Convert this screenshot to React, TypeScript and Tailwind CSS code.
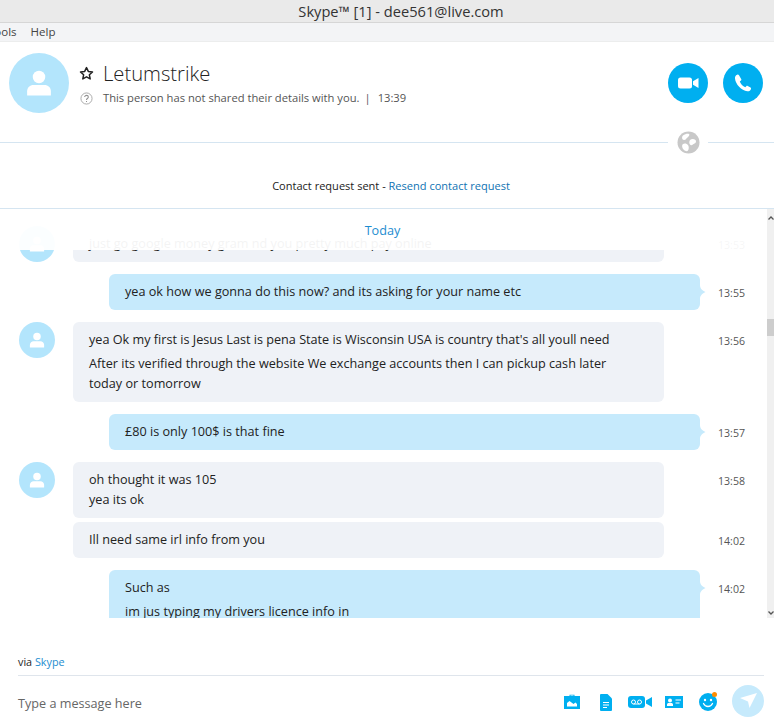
import React from "react";

function Person({ size, color = "#fff" }: { size: number; color?: string }) {
  return (
    <svg width={size} height={size} viewBox="0 0 24 24" fill={color}>
      <circle cx="12" cy="7.2" r="5" />
      <path d="M2.5 22v-3.5c0-3 2.4-5 5-5h9c2.6 0 5 2 5 5V22z" />
    </svg>
  );
}

function Avatar() {
  return (
    <div className="w-9 h-9 rounded-full bg-[#b3e5fc] flex items-center justify-center shrink-0">
      <Person size={18} />
    </div>
  );
}

function Tip() {
  return (
    <svg className="absolute left-full top-[11px]" width="6" height="14" viewBox="0 0 6 14" fill="#c6eafc">
      <path d="M0 0c0 3 1.500 5 5.500 7C1.500 9 0 11 0 14z" />
    </svg>
  );
}

function Row({ children, time, avatar, self, mt = "mt-3", clip }: { children: React.ReactNode; time?: string; avatar?: boolean; self?: boolean; mt?: string; clip?: boolean }) {
  return (
    <div className={`flex items-start ${mt}`}>
      <div className="w-[73px] shrink-0 pl-[19px]">{avatar && <Avatar />}</div>
      {self ? (
        <div className={`ml-9 w-[591px] relative bg-[#c6eafc] rounded-t-md ${clip ? "" : "rounded-b-md"} px-4 pt-[7px] pb-[9px] text-[#222]`}>
          {children}
          <Tip />
        </div>
      ) : (
        <div className="w-[591px] mr-9 bg-[#eff2f7] rounded-md px-4 pt-[7px] pb-[9px] text-[#222]">{children}</div>
      )}
      <div className="ml-[18px] mt-[11px] text-[10.600px] leading-4 text-[#555]">{time}</div>
    </div>
  );
}

export default function App() {
  return (
    <div className="w-[774px] h-[725px] overflow-hidden bg-white flex flex-col text-[12.650px] leading-5 text-[#222] font-['Open_Sans',sans-serif]">
      <div className="h-[23px] shrink-0 bg-[#eaeaea] border-b border-[#d6d6d6] flex items-center justify-center text-[14.650px] text-[#333] pl-[28px]">
        Skype™ [1] - dee561@live.com
      </div>
      <div className="h-[19px] shrink-0 bg-[#f3f4f6] border-b border-[#eceded] flex items-center gap-[14px] text-[11.500px] text-[#444] -ml-[12px]">
        <span>Tools</span>
        <span>Help</span>
      </div>

      <div className="h-[100px] shrink-0 flex items-start pt-[11px] pl-[9px] pr-[11px]">
        <div className="w-[60px] h-[60px] rounded-full bg-[#b3e5fc] flex items-center justify-center shrink-0">
          <Person size={30} />
        </div>
        <div className="ml-[10px] flex-1 pt-[5px]">
          <div className="flex items-center h-[30px]">
            <svg width="15" height="15" viewBox="0 0 24 24" fill="none" stroke="#222" strokeWidth="2.400" strokeLinejoin="round">
              <path d="M12 2.500l2.900 6.200 6.700.8-5 4.600 1.300 6.600-5.900-3.300-5.900 3.300 1.300-6.600-5-4.600 6.700-.8z" />
            </svg>
            <span className="ml-[9px] text-[20.200px] font-light text-[#222] leading-[30px]">Letumstrike</span>
          </div>
          <div className="flex items-center mt-[2px] text-[11.200px] leading-4 text-[#555]">
            <svg width="13" height="13" viewBox="0 0 14 14" fill="none" className="ml-[1px]">
              <circle cx="7" cy="7" r="6" stroke="#a5a5a5" />
              <path d="M5 5.500c0-2.500 4-2.500 4 0 0 1.500-2 1.500-2 3M7 9.800v1" stroke="#909090" strokeWidth="1.100" />
            </svg>
            <span className="ml-[10px]">This person has not shared their details with you.</span>
            <span className="ml-[5px]">|</span>
            <span className="ml-[7px]">13:39</span>
          </div>
        </div>
        <div className="flex gap-[15px] pt-[10px]">
          <div className="w-10 h-10 rounded-full bg-[#00aff0] flex items-center justify-center">
            <svg width="21" height="12" viewBox="0 0 21 12" fill="#fff">
              <rect x="0" y="0.500" width="14" height="11" rx="2.500" />
              <path d="M15 4.200 20.500 1v10L15 7.800z" />
            </svg>
          </div>
          <div className="w-10 h-10 rounded-full bg-[#00aff0] flex items-center justify-center">
            <svg width="18" height="18" viewBox="0 0 18 18" fill="#fff">
              <path d="M3.200.7C1.600 1.300.8 2.600 1 4.500c.5 5.800 6.500 12 12.300 12.800 1.900.2 3.100-.8 3.700-2.300.2-.6 0-1.100-.5-1.400l-2.800-1.600c-.5-.3-1-.2-1.400.2l-1 1.100c-2.500-1-4.600-3.300-5.500-5.700l1.200-1c.4-.4.500-.9.300-1.400L5 1.200C4.600.6 3.900.4 3.200.7z" />
            </svg>
          </div>
        </div>
      </div>

      <div className="h-[1px] shrink-0 flex items-center relative">
        <div className="w-[668px] h-px bg-[#d5e5f1]" />
        <div className="w-10 flex justify-center">
          <svg width="23" height="23" viewBox="0 0 23 23" className="shrink-0">
            <circle cx="11.500" cy="11.500" r="11" fill="#c8c8c8" />
            <path d="M6 4.500c2-1.500 4.500-2 6-1.500 1 .5 0 2.500-1.500 3.500S9 9 7 9 4.500 6 6 4.500zM13 9c2-1.500 4-1 5.500 0 1 1 .5 3-1 3.500s-2.500 2.500-4 1.500-1.500-3.500-.5-5zM6 13c1.500-1 4-.5 5 1s1 4 0 5.500-3 .5-4.500-1S4.500 14 6 13z" fill="#fff" />
          </svg>
        </div>
        <div className="flex-1 h-px bg-[#d5e5f1]" />
      </div>

      <div className="h-[65px] shrink-0 flex items-center justify-center pt-[21px] text-[11.040px] text-[#222] pl-[8px]">
        <span>Contact request sent - <span className="text-[#0f73b3]">Resend contact request</span></span>
      </div>
      <div className="h-px shrink-0 bg-[#d5e5f1]" />

      <div className="h-[409px] shrink-0 relative overflow-hidden">
        <div className="w-[767px] overflow-hidden h-full">
          <div className="pt-[17px]">
            <Row avatar time="13:53" mt="mt-0">
              <p>just go google money gram nd you pretty much pay online</p>
            </Row>
            <Row self time="13:55">
              <p>yea ok how we gonna do this now? and its asking for your name etc</p>
            </Row>
            <Row avatar time="13:56">
              <p>yea Ok my first is Jesus Last is pena State is Wisconsin USA is country that's all youll need</p>
              <p className="mt-1">After its verified through the website We exchange accounts then I can pickup cash later<br />today or tomorrow</p>
            </Row>
            <Row self time="13:57">
              <p>£80 is only 100$ is that fine</p>
            </Row>
            <Row avatar time="13:58">
              <p>oh thought it was 105<br />yea its ok</p>
            </Row>
            <Row time="14:02" mt="mt-1">
              <p>Ill need same irl info from you</p>
            </Row>
            <Row self clip time="14:02">
              <p>Such as</p>
              <p className="mt-1">im jus typing my drivers licence info in</p>
            </Row>
          </div>
        </div>

        <div className="absolute left-0 top-0 w-[767px] h-[41px] bg-white/95 flex justify-center pt-[11px] text-[#1d8dd0]">
          <span className="text-[12.650px] leading-[20px] -translate-x-[1px]">Today</span>
        </div>

        <div className="absolute right-0 top-0 bottom-0 w-[7px] bg-[#f0f0f0]">
          <svg className="absolute left-[1px] top-[7px]" width="6" height="4" viewBox="0 0 6 4" fill="none" stroke="#555" strokeWidth="1.300"><path d="M.5 3.500 3 1l2.500 2.500" /></svg>
          <div className="absolute left-0 right-0 top-[110px] h-[17px] bg-[#cdcdcd]" />
          <svg className="absolute left-[1px] bottom-[3px]" width="6" height="4" viewBox="0 0 6 4" fill="none" stroke="#555" strokeWidth="1.300"><path d="M.5.5 3 3 5.500.5" /></svg>
        </div>
      </div>

      <div className="flex-1 flex flex-col pl-[18px] pr-[10px]">
        <div className="h-[58px] shrink-0 border-b border-[#dfe5ec] flex items-end pb-[5px] text-[10.800px] leading-4 text-[#222]">
          <span>via <span className="text-[#1d8dd0]">Skype</span></span>
        </div>
        <div className="flex-1 flex items-center">
          <span className="flex-1 pt-[5px] text-[12.650px] text-[#666]">Type a message here</span>
          <div className="flex items-center mt-[3px]">
            <svg width="16" height="16" viewBox="0 0 16 16" fill="#00aff0">
              <path d="M5.500 2V.8h5V2H16v13H0V2zm1 0h3v-.4h-3z" />
              <path d="M3 9l2.500-2 4 3 2-1.500L13 10v2.500H3z" fill="#fff" />
            </svg>
            <svg className="ml-[20px]" width="12" height="17" viewBox="0 0 12 17" fill="#00aff0">
              <path d="M0 1a1 1 0 0 1 1-1h6.500L12 4.500V16a1 1 0 0 1-1 1H1a1 1 0 0 1-1-1z" />
              <path d="M3 8h6v1H3zM3 10.500h6v1H3zM3 13h4v1H3z" fill="#fff" />
            </svg>
            <svg className="ml-[16px]" width="24" height="12" viewBox="0 0 24 12" fill="#00aff0">
              <rect x="0" y="0" width="17" height="12" rx="3" />
              <circle cx="5.500" cy="6" r="2" fill="none" stroke="#fff" />
              <circle cx="11.500" cy="6" r="2" fill="none" stroke="#fff" />
              <path d="M5.500 8h6" stroke="#fff" />
              <path d="M18 4.500 24 1v10l-6-3.500z" />
            </svg>
            <svg className="ml-[13px]" width="18" height="12" viewBox="0 0 18 12" fill="#00aff0">
              <path d="M0 0h18v12H0z" />
              <circle cx="5" cy="4.500" r="2" fill="#fff" />
              <path d="M2 10V8.500c0-1 1-1.500 1.500-1.500h3c.5 0 1.500.5 1.500 1.500V10zM10.500 3.500h5.500v1h-5.500zM10.500 6.500h4v1h-4z" fill="#fff" />
            </svg>
            <div className="relative ml-[16px] w-[18px] h-[20px]">
              <svg width="18" height="18" viewBox="0 0 18 18" className="absolute left-0 top-[1px]">
                <circle cx="9" cy="9" r="9" fill="#00aff0" />
                <circle cx="6" cy="7" r="1.200" fill="#fff" />
                <circle cx="12" cy="7" r="1.200" fill="#fff" />
                <path d="M4.500 10.500c1 2 2.700 3 4.500 3s3.500-1 4.500-3" fill="none" stroke="#fff" strokeWidth="1.300" strokeLinecap="round" />
              </svg>
              <div className="absolute right-0 top-0 w-[5px] h-[5px] rounded-full bg-[#ff8c00]" />
            </div>
          </div>
          <div className="ml-[15px] w-8 h-8 rounded-full bg-[#c6eafc] flex items-center justify-center">
            <svg width="17" height="15" viewBox="0 0 17 15" fill="#fff">
              <path d="M0 5 17 0 9.500 15 8 8.500z" />
            </svg>
          </div>
        </div>
      </div>
    </div>
  );
}
